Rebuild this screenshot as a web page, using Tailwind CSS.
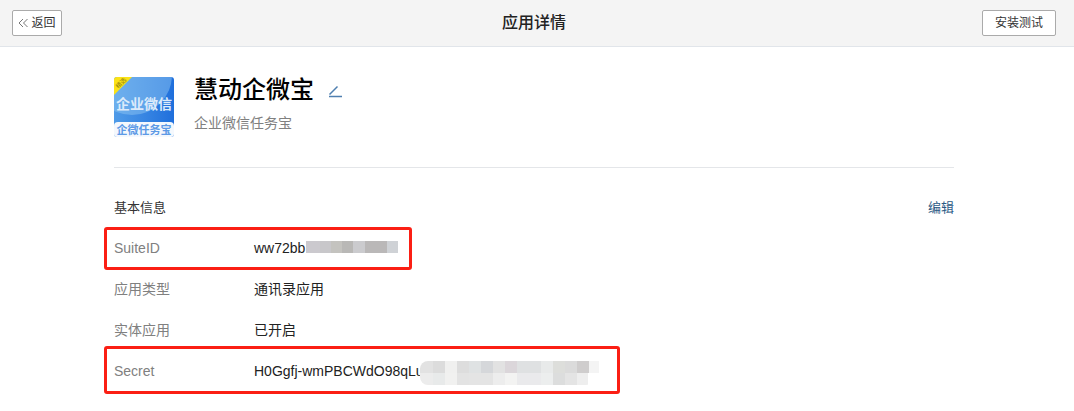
<!DOCTYPE html>
<html lang="zh-CN">
<head>
  <meta charset="UTF-8" />
  <title>应用详情</title>
  <script src="https://cdn.jsdelivr.net/npm/@tailwindcss/browser@4"></script>
</head>
<body class="relative h-[411px] overflow-hidden bg-white font-['Liberation_Sans','Noto_Sans_CJK_SC',sans-serif] text-[14px] text-[#222]">

  <!-- top bar -->
  <header class="relative flex h-[47px] items-center justify-between border-b border-[#e1e5ea] bg-[#f4f4f4] pl-3 pr-[18px]">
    <a class="flex h-[26px] w-[50px] items-center justify-center gap-[2px] rounded-[2px] border border-[#aaa] bg-white pr-[1px] text-[12px] text-[#333]">
      <svg width="12" height="10" viewBox="0 0 12 10" fill="none" stroke="#777" stroke-width="1"><path d="M6 1 2 5l4 4M10.500 1l-4 4 4 4"/></svg>
      返回
    </a>
    <h1 class="absolute left-[502px] top-[12px] text-[16px] leading-[22px] font-medium text-[#222]">应用详情</h1>
    <button class="h-[26px] w-[74px] rounded-[2px] border border-[#aaa] bg-white text-[12px] text-[#333]">安装测试</button>
  </header>

  <main class="mx-[114px] w-[840px]">
    <!-- app head -->
    <section class="flex h-[121px] border-b border-[#e4e6e9] pt-[30px]">
      <div class="relative h-[60px] w-[60px] overflow-hidden rounded-[3px] bg-gradient-to-r from-[#4f9be8] to-[#1f6fdc]">
        <div class="absolute left-[-22px] top-[-42px] h-[80px] w-[80px] rounded-full bg-[#8cc4f2]/50"></div>
        <div class="absolute left-[-26px] top-[-17px] h-[24px] w-[64px] -rotate-45 bg-[#fbe216]"></div>
        <span class="absolute left-[1px] top-[1px] -rotate-45 text-[6px] leading-[10px] text-[#8a7a10]">精选</span>
        <p class="absolute left-0 top-[18px] w-full text-center text-[14px] leading-[18px] font-bold whitespace-nowrap text-[#dcebfb]">企业微信</p>
        <p class="absolute bottom-0 left-0 h-[15px] w-full rounded-t-[4px] bg-[#f4f8fd] text-center text-[11px] leading-[16px] font-bold whitespace-nowrap text-[#5d9ae6]">企微任务宝</p>
      </div>
      <div class="ml-5">
        <div class="flex items-center">
          <h2 class="text-[24px] leading-[26px] font-medium text-black">慧动企微宝</h2>
          <svg class="ml-[14px] mt-[2px]" width="15" height="13" viewBox="0 0 15 13" fill="none" stroke="#4f7fb0" stroke-width="1.500"><path d="M1.500 9.500 9.500 1.500M1 11.500h13"/></svg>
        </div>
        <p class="mt-[10px] text-[14px] leading-[20px] text-[#808080]">企业微信任务宝</p>
      </div>
    </section>

    <!-- basic info -->
    <section class="pt-[30px]">
      <div class="flex h-[20px] items-center justify-between text-[13px] text-[#333]">
        <span>基本信息</span>
        <a class="text-[#2c5a85]">编辑</a>
      </div>
      <dl class="mt-[10px]">
        <div class="flex h-[41px] items-center">
          <dt class="w-[140px] text-[#808080]">SuiteID</dt>
          <dd class="relative">ww72bb
            <span class="absolute left-[52px] top-[3px] flex h-[12px] w-[92px]">
              <i class="w-[15px] bg-[#cbc9ce]"></i><i class="w-[12px] bg-[#c8c7ca]"></i><i class="w-[12px] bg-[#c4c3bf]"></i><i class="w-[12px] bg-[#b9b8b6]"></i><i class="w-[12px] bg-[#cbcbce]"></i><i class="w-[24px] bg-[#bab8b8]"></i><i class="w-[12px] bg-[#cfd2d6]"></i>
            </span>
          </dd>
        </div>
        <div class="flex h-[41px] items-center">
          <dt class="w-[140px] text-[#808080]">应用类型</dt>
          <dd>通讯录应用</dd>
        </div>
        <div class="flex h-[41px] items-center">
          <dt class="w-[140px] text-[#808080]">实体应用</dt>
          <dd>已开启</dd>
        </div>
        <div class="flex h-[41px] items-center">
          <dt class="w-[140px] text-[#808080]">Secret</dt>
          <dd class="relative">H0Ggfj-wmPBCWdO98qLu
            <span class="absolute left-[166px] top-0 flex h-[12px] w-[186px] overflow-hidden rounded-tl-[8px] rounded-tr-[6px]">
              <i class="w-[13px] bg-[#e2e2e2]"></i><i class="w-[12px] bg-[#dcdcdc]"></i><i class="w-[12px] bg-[#f0f0ef]"></i><i class="w-[12px] bg-[#dddddd]"></i><i class="w-[12px] bg-[#dfe2e3]"></i><i class="w-[12px] bg-[#d5d7da]"></i><i class="w-[12px] bg-[#e2e2e2]"></i><i class="w-[12px] bg-[#dbd6da]"></i><i class="w-[24px] bg-[#dfe1e2]"></i><i class="w-[12px] bg-[#e8eaea]"></i><i class="w-[12px] bg-[#dddedb]"></i><i class="w-[12px] bg-[#dbdbdb]"></i><i class="w-[12px] bg-[#cfcdcd]"></i><i class="w-[10px] bg-[#f4f4f4]"></i>
            </span>
            <span class="absolute left-[166px] top-[12px] flex h-[12px] w-[174px] overflow-hidden rounded-b-[8px]">
              <i class="w-[13px] bg-[#ececec]"></i><i class="w-[12px] bg-[#e8eaea]"></i><i class="w-[12px] bg-[#f1f1f0]"></i><i class="w-[12px] bg-[#e3e3e3]"></i><i class="w-[24px] bg-[#e4e4e4]"></i><i class="w-[12px] bg-[#ededed]"></i><i class="w-[12px] bg-[#f3f3f2]"></i><i class="w-[24px] bg-[#eaeaec]"></i><i class="w-[12px] bg-[#eceeee]"></i><i class="w-[12px] bg-[#dcdddd]"></i><i class="w-[12px] bg-[#e4e4e4]"></i><i class="w-[11px] bg-[#eeeeee]"></i>
            </span>
          </dd>
        </div>
      </dl>
    </section>
  </main>

  <!-- red annotation boxes drawn over the page -->
  <div class="absolute left-[104px] top-[227px] h-[43px] w-[308px] rounded-[3px] border-[3px] border-[#fb1f14]"></div>
  <div class="absolute left-[104px] top-[346px] h-[48px] w-[516px] rounded-[3px] border-[3px] border-[#fb1f14]"></div>
</body>
</html>
